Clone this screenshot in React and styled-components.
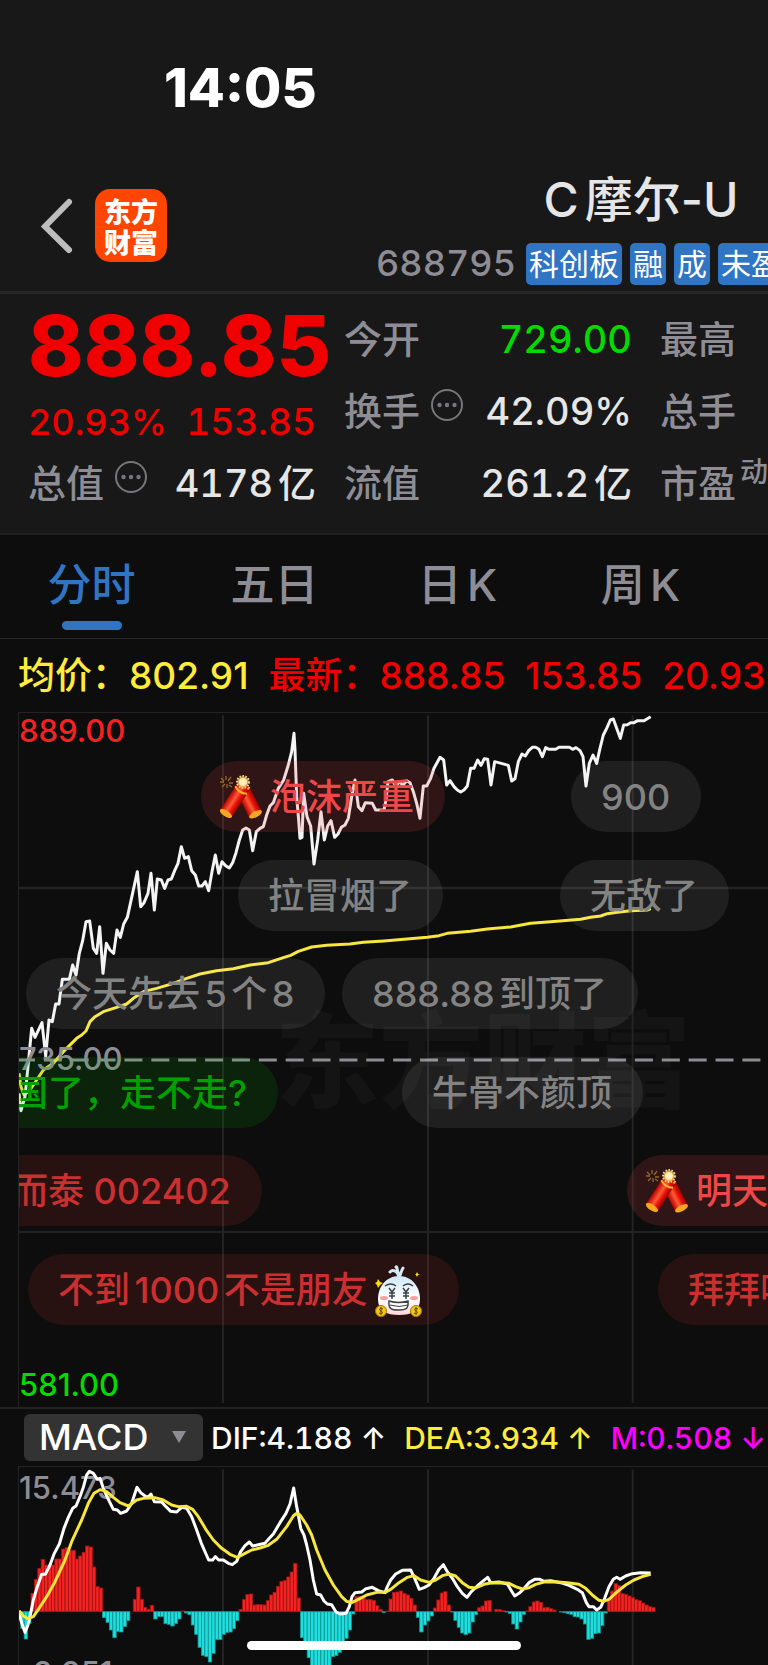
import styled, { createGlobalStyle } from 'styled-components';

const GlobalStyle = createGlobalStyle`
  * {
    box-sizing: border-box;
  }

  body {
    margin: 0;
    background: #0d0d0d;
    color: #e6e6e6;
    font-family: Inter, 'Noto Sans CJK SC', sans-serif;
    font-weight: 500;
    line-height: 1.2;
    text-autospace: normal;
  }

  h1, p, dl, dd, dt {
    margin: 0;
  }

  button, select {
    font: inherit;
    border: 0;
    padding: 0;
  }
`;

const Screen = styled.main`
  position: relative;
  overflow: hidden;
  white-space: nowrap;
`;

const StatusBar = styled.div`
  height: 155px;
  padding: 55px 0 0 164px;
  background: #181818;
  color: #fff;
  font-size: 54px;
  font-weight: 800;
  line-height: 66px;
`;

const Header = styled.header`
  display: flex;
  height: 139px;
  background: #181818;
  border-bottom: 3px solid #262626;
`;

const BackButton = styled.button`
  flex: none;
  width: 32px;
  height: 56px;
  margin: 43px 0 0 41px;
  background: none;
  color: #bdbdbd;

  svg {
    display: block;
  }
`;

const Logo = styled.a`
  display: grid;
  flex: none;
  place-content: center;
  width: 72px;
  height: 73px;
  margin: 34px 0 0 22px;
  border-radius: 15px;
  background: #ff4500;
  color: #fff;
  font-family: 'Noto Sans CJK SC', sans-serif;
  font-size: 27px;
  font-weight: 900;
  line-height: 31px;
  text-decoration: none;
`;

const TitleBlock = styled.div`
  flex: none;
  width: 530px;
  margin-left: 209px;
  padding-top: 12px;
`;

const Title = styled.h1`
  font-size: 48px;
  font-weight: 500;
  line-height: 66px;
  text-align: center;
`;

const TagRow = styled.div`
  display: flex;
  align-items: center;
  gap: 8px;
  height: 42px;
  margin-top: 10px;
`;

const Code = styled.span`
  margin-right: 2px;
  color: #8e8d95;
  font-size: 36px;
  font-variant-numeric: tabular-nums;
`;

const Tag = styled.span`
  padding: 0 3px;
  border-radius: 5px;
  background: #3074c4;
  color: #fff;
  font-size: 30px;
  font-weight: 400;
  line-height: 42px;
`;

const Quote = styled.section`
  display: grid;
  grid-template-columns: repeat(3, 288px);
  gap: 28px;
  height: 241px;
  padding: 10px 28px 0;
  background: #181818;
  border-bottom: 2px solid #202020;
  font-variant-numeric: tabular-nums;
`;

const Price = styled.p`
  color: #f00000;
  font-size: 84px;
  font-weight: 800;
  font-variant-numeric: normal;
  line-height: 84px;
`;

const Change = styled.p`
  display: flex;
  justify-content: space-between;
  color: #f00000;
  font-size: 36px;
  line-height: 68px;

  span:last-child {
    font-size: 37px;
  }
`;

const Figures = styled.dl`
  font-size: 38px;
`;

const Figure = styled.div`
  display: flex;
  align-items: center;
  height: ${(props) => (props.$short ? 56 : 72)}px;

  dt {
    display: flex;
    align-items: center;
    gap: 10px;
    color: #8e8d95;
  }

  dd {
    margin-left: auto;
    color: ${(props) => props.$color || '#e6e6e6'};
  }

  svg {
    margin-bottom: 14px;
  }

  sup {
    margin: 0 0 24px -6px;
    font-size: 28px;
    line-height: 28px;
  }
`;

const Tabs = styled.nav`
  display: flex;
  height: 104px;
  border-bottom: 1px solid #242424;
`;

const Tab = styled.button`
  display: flex;
  flex: 0 0 183px;
  flex-direction: column;
  align-items: center;
  background: none;
  color: ${(props) => (props.$active ? '#3074c4' : '#8e8d95')};
  font-size: 44px;
  line-height: 64px;
  padding-top: 18px;

  &::after {
    content: '';
    width: 60px;
    height: 9px;
    margin-top: 4px;
    border-radius: 5px;
    background: ${(props) => (props.$active ? '#3074c4' : 'transparent')};
  }
`;

const Averages = styled.div`
  display: flex;
  gap: 20px;
  height: 73px;
  padding-left: 18px;
  font-size: 37px;
  line-height: 74px;
  color: #f00000;
`;

const Average = styled.span`
  color: #ffeb3b;
`;

const Chart = styled.section`
  position: relative;
  height: ${(props) => props.$height}px;
  margin-left: 18px;
  border: solid #232323;
  border-width: 1px 0 0 1px;
  overflow: hidden;
`;

const Plot = styled.svg`
  position: absolute;
  top: -1px;
  left: -1px;
`;

const AxisLabel = styled.span`
  position: absolute;
  top: ${(props) => props.$top}px;
  left: 0;
  color: ${(props) => props.$color};
  font-size: 31px;
  line-height: 36px;
`;

const Watermark = styled.span`
  position: absolute;
  top: 272px;
  left: 256px;
  color: #141414;
  font-family: 'Noto Sans CJK SC', sans-serif;
  font-size: 104px;
  font-weight: 900;
  line-height: 140px;
`;

const pillTones = {
  gray: ['rgba(255, 255, 255, 0.08)', '#838383'],
  hot: ['rgba(240, 70, 70, 0.15)', '#ee4747'],
  red: ['rgba(225, 50, 50, 0.13)', '#cb2f2f'],
  green: ['rgba(0, 190, 0, 0.12)', '#00a000'],
};

const Pill = styled.span`
  position: absolute;
  top: ${(props) => 48 + Math.round(props.$lane * 98.6)}px;
  left: ${(props) => props.$left}px;
  display: flex;
  align-items: center;
  gap: 7px;
  height: 71px;
  padding: 2px ${(props) => (props.$face ? 36 : 31)}px 0 ${(props) => (props.$tone === 'hot' ? 16 : 30)}px;
  border-radius: 36px;
  background: ${(props) => pillTones[props.$tone][0]};
  color: ${(props) => pillTones[props.$tone][1]};
  font-size: 36px;
`;

const IndicatorBar = styled.div`
  display: flex;
  align-items: center;
  height: 59px;
  padding-left: 24px;
  border-top: 2px solid #232323;
  font-size: 30px;
  font-variant-numeric: tabular-nums;
`;

const Picker = styled.label`
  position: relative;
  flex: none;
  margin-right: 8px;

  svg {
    position: absolute;
    top: 17px;
    right: 17px;
    pointer-events: none;
  }
`;

const Select = styled.select`
  display: block;
  width: 179px;
  height: 47px;
  padding-left: 15px;
  border-radius: 6px;
  appearance: none;
  background: #333;
  color: #fff;
  font-size: 36px;
`;

const Reading = styled.span`
  margin-right: 18px;
  color: ${(props) => props.$color};
`;

const HomeIndicator = styled.div`
  position: absolute;
  bottom: 15px;
  left: 247px;
  width: 274px;
  height: 9px;
  border-radius: 5px;
  background: #fff;
`;

/* all plots use three units per pixel */
const STEP = 10.23;
const GRID_X = [669, 1284, 1898];

const PRICE_LINE =
  '57,1180 63,1232 75,1190 84,1100 95,985 105,1012 126,968 137,1068 147,960 157,965 167,912 177,912 187,838 208,838 218,795 228,825 238,760 248,722 258,665 269,663 280,745 290,760 299,680 309,820 319,730 330,750 341,760 351,690 361,712 371,672 382,652 412,515 422,620 432,608 444,580 453,520 463,630 472,537 484,540 494,565 504,540 514,537 524,512 534,490 544,440 554,475 565,470 575,512 586,525 596,558 606,558 616,545 626,572 636,515 646,465 656,520 666,485 677,497 688,504 698,488 708,458 718,420 728,390 738,384 748,390 758,452 769,395 780,385 790,380 800,345 810,318 820,308 835,265 851,240 865,195 875,155 882,100 885,150 890,290 896,360 900,415 906,412 911,280 921,350 932,378 942,492 953,420 963,335 973,420 983,378 993,362 1004,412 1014,402 1024,382 1035,375 1045,355 1055,290 1065,240 1075,320 1086,332 1096,308 1117,310 1127,330 1152,330 1158,300 1164,245 1177,240 1188,260 1197,245 1209,255 1220,242 1230,248 1240,275 1250,310 1260,355 1270,258 1280,258 1292,235 1302,205 1320,172 1331,180 1340,255 1350,242 1362,260 1372,270 1382,276 1392,270 1402,258 1412,205 1422,205 1433,180 1443,196 1453,176 1463,178 1473,255 1484,185 1504,190 1515,193 1525,196 1535,243 1545,236 1555,185 1566,162 1576,168 1586,152 1597,142 1607,142 1617,148 1627,170 1637,143 1647,148 1667,148 1677,142 1708,142 1718,148 1728,143 1740,152 1749,170 1758,258 1768,190 1779,165 1790,190 1800,145 1810,105 1820,85 1831,60 1840,57 1850,85 1861,115 1871,75 1882,74 1892,68 1902,68 1913,62 1932,62 1952,50';

const AVERAGE_LINE =
  '57,1120 63,1160 72,1185 90,1170 110,1140 130,1110 160,1090 190,1055 215,1030 230,1015 245,1005 258,993 270,965 285,950 310,935 350,922 380,912 400,895 430,875 470,865 520,850 560,835 600,822 650,812 700,806 750,795 805,788 850,773 872,766 895,754 935,741 980,736 1050,732 1090,727 1152,723 1212,718 1282,712 1317,707 1342,700 1412,694 1462,687 1532,681 1592,670 1652,665 1742,658 1772,652 1802,648 1822,641 1852,637 1892,632 1942,630 1952,626';

const DIF_LINE =
  '57,640 66,672 75,697 84,675 92,640 100,600 112,560 125,523 136,523 150,495 163,460 178,432 192,385 205,352 218,325 228,318 240,290 250,262 260,225 268,214 280,220 292,238 300,235 310,265 325,298 340,328 352,330 362,340 380,333 395,310 411,262 422,278 435,288 444,292 453,282 463,305 485,306 498,320 512,334 530,336 545,322 560,325 575,350 590,390 604,430 618,462 626,480 638,480 646,470 656,480 670,480 685,490 697,494 710,484 722,455 735,437 748,426 758,438 775,434 795,430 808,415 820,402 840,368 858,340 870,312 881,264 890,320 896,350 902,385 912,405 920,435 930,480 940,540 950,582 962,585 972,603 982,612 995,614 1008,636 1020,642 1038,640 1048,620 1056,590 1065,578 1085,576 1098,566 1117,562 1135,572 1155,578 1162,560 1172,540 1187,522 1207,511 1232,510 1244,535 1258,568 1272,563 1287,555 1302,535 1317,508 1330,494 1342,515 1357,535 1372,560 1387,580 1401,592 1414,575 1432,558 1447,545 1463,532 1472,548 1497,546 1522,552 1534,572 1544,588 1557,580 1570,568 1587,548 1604,538 1620,538 1632,544 1652,542 1682,548 1707,556 1732,568 1747,578 1759,608 1767,620 1780,620 1790,630 1802,622 1814,595 1827,560 1840,538 1850,532 1860,538 1877,528 1897,521 1922,518 1952,519';

const DEA_LINE =
  '57,632 70,648 84,656 100,650 115,628 140,590 165,545 195,480 215,425 245,360 265,310 282,280 300,269 320,275 340,292 360,308 385,318 410,300 430,295 465,293 490,300 515,315 535,320 560,319 578,328 595,350 620,392 640,420 665,445 690,463 712,472 735,460 755,450 780,444 805,436 830,418 860,380 880,348 888,341 900,345 920,375 935,405 950,450 975,510 1000,555 1025,590 1040,604 1055,608 1075,598 1100,585 1130,577 1155,577 1172,568 1197,548 1222,532 1242,527 1262,540 1287,547 1307,540 1327,527 1347,522 1367,528 1387,548 1407,562 1427,564 1452,553 1472,549 1502,548 1527,550 1547,560 1567,567 1587,563 1607,553 1632,546 1662,545 1702,548 1737,553 1757,565 1777,585 1797,601 1810,604 1827,598 1852,575 1877,555 1902,540 1927,530 1952,523';

const HISTOGRAM = [
  -25, -50, -82, -35, 55, 97, 130, 157, 140, 138, 140, 158, 158, 188, 192, 184, 184, 158, 167, 178, 197, 194, 134, 75, 71,
  -18, -32, -55, -78, -60, -61, -45, -27, 0, 37, 74, 37, 13, 7, 19, -22, -15, -15, -36, -38, -43, -36, -22, 2, -4, -9, -40,
  -68, -107, -131, -135, -151, -125, -84, -84, -68, -62, -61, -51, -27, 7, 36, 51, 53, 20, 21, 21, 20, 33, 50, 58, 76, 91, 93,
  104, 119, 145, 41, -78, -98, -138, -175, -180, -185, -180, -175, -165, -135, -132, -122, -100, -80, -55, -7, 46, 45, 42, 36,
  36, 34, 18, 7, -2, 2, 38, 58, 59, 62, 55, 50, 40, 20, -17, -61, -40, -28, -13, 11, 35, 56, 60, 20, -1, -26, -47, -64, -69,
  -64, -31, -9, 12, 17, 32, 34, 0, 7, 6, 3, -1, -6, -37, -52, -31, -8, 2, 15, 29, 32, 28, 12, 13, 9, 5, 0, -1, -3, -6, -8,
  -15, -16, -22, -37, -83, -80, -66, -64, -42, -4, 34, 62, 84, 78, 54, 52, 47, 42, 36, 33, 26, 20, 15, 13,
];

const MoreIcon = () => (
  <svg width='34' height='34' viewBox='0 0 34 34' fill='#77767b' aria-hidden='true'>
    <circle cx='17' cy='17' r='15' fill='none' stroke='#77767b' strokeWidth='2' />
    <circle cx='9.5' cy='17' r='2.2' />
    <circle cx='17' cy='17' r='2.2' />
    <circle cx='24.5' cy='17' r='2.2' />
  </svg>
);

const Firecracker = () => (
  <svg width='46' height='48' viewBox='0 0 46 48' aria-hidden='true'>
    <defs>
      <linearGradient id='tube' x1='0' x2='1'>
        <stop offset='0' stopColor='#b80000' />
        <stop offset='0.45' stopColor='#ff5a36' />
        <stop offset='0.7' stopColor='#e81508' />
        <stop offset='1' stopColor='#a00000' />
      </linearGradient>
      <radialGradient id='spark'>
        <stop offset='0' stopColor='#fffbe0' />
        <stop offset='0.6' stopColor='#ffe9a0' />
        <stop offset='1' stopColor='#d89a3a' stopOpacity='0.5' />
      </radialGradient>
    </defs>
    <g transform='rotate(-27 24 14)'>
      <rect x='18' y='13' width='14' height='31' fill='url(#tube)' />
      <ellipse cx='25' cy='44' rx='7' ry='3' fill='#f5a623' />
      <path d='M18 17q7 4 14 0' fill='none' stroke='#ffb52e' strokeWidth='2' />
    </g>
    <g transform='rotate(33 25 13)'>
      <rect x='19' y='12' width='14' height='32' fill='url(#tube)' />
      <ellipse cx='26' cy='44' rx='7' ry='3' fill='#f5a623' />
      <path d='M19 16q7 4 14 0' fill='none' stroke='#ffb52e' strokeWidth='2' />
    </g>
    <circle cx='26' cy='8' r='6' fill='url(#spark)' />
    <circle cx='26' cy='8' r='6' fill='none' stroke='#f7d98a' strokeWidth='2' strokeDasharray='1.5 1.5' />
    <path d='M4 4l3 3M9 2v4M14 3l-3 4M3 8h4M12 9h4M5 13l3-3M10 10v4M15 13l-3-2' stroke='#94682a' strokeWidth='1.3' />
  </svg>
);

const MoneyFace = () => (
  <svg width='48' height='52' viewBox='0 0 48 52' aria-hidden='true'>
    <defs>
      <linearGradient id='face' x1='0' y1='0' x2='0' y2='1'>
        <stop offset='0' stopColor='#cfe8f5' />
        <stop offset='0.6' stopColor='#ffffff' />
        <stop offset='1' stopColor='#fbd5d5' />
      </linearGradient>
    </defs>
    <path d='M24 13C23 6 18 4 15 7M24 13C22 4 22 1 21 2M24 13C26 8 27 4 28 3' fill='none' stroke='#d5e9f3' strokeWidth='3' strokeLinecap='round' />
    <path d='M24 11C37 11 45 22 45 34C45 46 37 50 24 50C11 50 3 46 3 34C3 22 11 11 24 11Z' fill='url(#face)' />
    <path d='M10 21q6-4 11 0M28 21q5-4 10 0' fill='none' stroke='#3d4044' strokeWidth='1.5' />
    <path d='M14 23l3 4 3-4M14 28h6M14 31h6M17 27v7M28 23l3 4 3-4M28 28h6M28 31h6M31 27v7' fill='none' stroke='#3d4044' strokeWidth='1.5' />
    <ellipse cx='9' cy='33' rx='4' ry='2' fill='#ff9d9d' />
    <ellipse cx='39' cy='33' rx='4' ry='2' fill='#ff9d9d' />
    <path d='M14 36q10 3 19 0c1 10-5 9-10 9s-10 0-9-9Z' fill='#fff' stroke='#3d4044' strokeWidth='1.5' />
    <path d='M15 40q9 3 18 0' fill='none' stroke='#3d4044' />
    <path d='M3 14l2 3 3 1-3 2-2 3-1-3-2-2 2-1zM42 7l1 2 2 0-2 1-1 2-1-2-1-1 1 0z' fill='#ffe100' />
    <circle cx='6' cy='46' r='5.5' fill='#f2c51a' stroke='#a57b00' />
    <circle cx='41' cy='46' r='5.5' fill='#f2c51a' stroke='#a57b00' />
    <path d='M8 44c-3-2-5 1-2 2s1 4-2 2M6 42v8M43 44c-3-2-5 1-2 2s1 4-2 2M41 42v8' fill='none' stroke='#5b4300' />
  </svg>
);

const Trend = ({ points, color }) => (
  <polyline points={points} fill='none' stroke={color} strokeWidth='9' strokeLinejoin='round' />
);

const PriceChart = () => (
  <Chart $height={695}>
    <Watermark>东方财富</Watermark>
    <Plot width='820' height='696' viewBox='54 36 2460 2088'>
      <g stroke='#232323' strokeWidth='6'>
        {GRID_X.map((x) => (
          <line key={x} x1={x} x2={x} y1='46' y2='2109' />
        ))}
        <line x1='54' x2='2514' y1='564' y2='564' strokeWidth='8' />
        <line x1='54' x2='2514' y1='1596' y2='1596' />
      </g>
      <line x1='51' x2='2514' y1='1080' y2='1080' stroke='#8e8d95' strokeWidth='9' strokeDasharray='54 26.6' />
      <Trend points={AVERAGE_LINE} color='#f7e63c' />
      <Trend points={PRICE_LINE} color='#f4f4f4' />
    </Plot>
    <AxisLabel $top={0} $color='#f82020'>889.00</AxisLabel>
    <AxisLabel $top={328} $color='#8e8d95'>735.00</AxisLabel>
    <AxisLabel $top={654} $color='#00dc00'>581.00</AxisLabel>
    <Pill $tone='hot' $lane={0} $left={182}>
      <Firecracker />
      泡沫严重
    </Pill>
    <Pill $tone='gray' $lane={0} $left={552}>900</Pill>
    <Pill $tone='gray' $lane={1} $left={219}>拉冒烟了</Pill>
    <Pill $tone='gray' $lane={1} $left={541}>无敌了</Pill>
    <Pill $tone='gray' $lane={2} $left={7}>今天先去5个8</Pill>
    <Pill $tone='gray' $lane={2} $left={323}>888.88到顶了</Pill>
    <Pill $tone='green' $lane={3} $left={-37}>国了，走不走?</Pill>
    <Pill $tone='gray' $lane={3} $left={383}>牛骨不颜顶</Pill>
    <Pill $tone='red' $lane={4} $left={-37}>而泰 002402</Pill>
    <Pill $tone='hot' $lane={4} $left={608}>
      <Firecracker />
      明天
    </Pill>
    <Pill $tone='red' $lane={5} $left={9} $face>
      不到1000不是朋友
      <MoneyFace />
    </Pill>
    <Pill $tone='red' $lane={5} $left={639}>拜拜吧</Pill>
  </Chart>
);

const MacdChart = () => (
  <Chart $height={199}>
    <Plot width='820' height='199' viewBox='54 198 2460 597'>
      <g stroke='#232323' strokeWidth='6'>
        {GRID_X.map((x) => (
          <line key={x} x1={x} x2={x} y1='208' y2='795' />
        ))}
      </g>
      {HISTOGRAM.map((value, i) => (
        <rect
          key={i}
          x={52 + i * STEP}
          y={value > 0 ? 635 - value : 635}
          width={STEP}
          height={Math.abs(value)}
          fill={value > 0 ? '#f52222' : '#1fdede'}
          stroke={value > 0 ? '#a01616' : '#139494'}
          strokeWidth='2.5'
        />
      ))}
    </Plot>
    <AxisLabel $top={3} $color='#8e8d95'>15.473</AxisLabel>
    <AxisLabel $top={188} $color='#8e8d95'>-9.951</AxisLabel>
    <Plot width='820' height='199' viewBox='54 198 2460 597'>
      <Trend points={DIF_LINE} color='#fff' />
      <Trend points={DEA_LINE} color='#f7e63c' />
    </Plot>
  </Chart>
);

const App = () => {
  return (
    <Screen>
      <GlobalStyle />
      <StatusBar>14:05</StatusBar>
      <Header>
        <BackButton aria-label='返回'>
          <svg width='32' height='56' viewBox='0 0 32 56' fill='none' stroke='currentColor' strokeWidth='6' strokeLinecap='round'>
            <path d='M28 4L4 28.5L28 52' />
          </svg>
        </BackButton>
        <Logo href='#'>
          <span>东方</span>
          <span>财富</span>
        </Logo>
        <TitleBlock>
          <Title>C摩尔-U</Title>
          <TagRow>
            <Code>688795</Code>
            <Tag>科创板</Tag>
            <Tag>融</Tag>
            <Tag>成</Tag>
            <Tag>未盈利</Tag>
          </TagRow>
        </TitleBlock>
      </Header>

      <Quote>
        <div>
          <Price>888.85</Price>
          <Change>
            <span>20.93%</span>
            <span>153.85</span>
          </Change>
          <Figures>
            <Figure $short>
              <dt>总值<MoreIcon /></dt>
              <dd>4178亿</dd>
            </Figure>
          </Figures>
        </div>
        <Figures>
          <Figure $color='#00dc00'>
            <dt>今开</dt>
            <dd>729.00</dd>
          </Figure>
          <Figure>
            <dt>换手<MoreIcon /></dt>
            <dd>42.09%</dd>
          </Figure>
          <Figure>
            <dt>流值</dt>
            <dd>261.2亿</dd>
          </Figure>
        </Figures>
        <Figures>
          <Figure>
            <dt>最高</dt>
          </Figure>
          <Figure>
            <dt>总手</dt>
          </Figure>
          <Figure>
            <dt>市盈<sup>动</sup></dt>
          </Figure>
        </Figures>
      </Quote>

      <Tabs>
        <Tab $active>分时</Tab>
        <Tab>五日</Tab>
        <Tab>日K</Tab>
        <Tab>周K</Tab>
      </Tabs>

      <Averages>
        <Average>均价：802.91</Average>
        <span>最新：888.85</span>
        <span>153.85</span>
        <span>20.93%</span>
      </Averages>

      <PriceChart />

      <IndicatorBar>
        <Picker>
          <Select aria-label='指标'>
            <option>MACD</option>
          </Select>
          <svg width='14' height='12' viewBox='0 0 14 12' fill='#8e8d95'>
            <path d='M0 0H14L7 12Z' />
          </svg>
        </Picker>
        <Reading $color='#fff'>DIF:4.188 ↑</Reading>
        <Reading $color='#ffeb3b'>DEA:3.934 ↑</Reading>
        <Reading $color='#ff00ff'>M:0.508 ↓</Reading>
      </IndicatorBar>

      <MacdChart />
      <HomeIndicator />
    </Screen>
  );
};

export default App;
